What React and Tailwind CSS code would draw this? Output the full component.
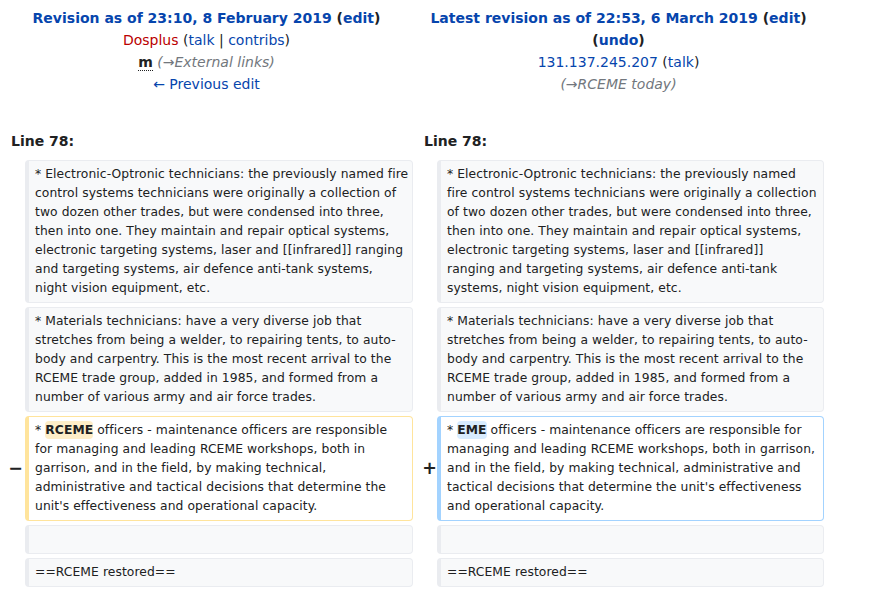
const link = "text-[#0645ad]";

const electronicLeft = [
    "* Electronic-Optronic technicians: the previously named fire",
    "control systems technicians were originally a collection of",
    "two dozen other trades, but were condensed into three,",
    "then into one. They maintain and repair optical systems,",
    "electronic targeting systems, laser and [[infrared]] ranging",
    "and targeting systems, air defence anti-tank systems,",
    "night vision equipment, etc.",
];

const electronicRight = [
    "* Electronic-Optronic technicians: the previously named",
    "fire control systems technicians were originally a collection",
    "of two dozen other trades, but were condensed into three,",
    "then into one. They maintain and repair optical systems,",
    "electronic targeting systems, laser and [[infrared]]",
    "ranging and targeting systems, air defence anti-tank",
    "systems, night vision equipment, etc.",
];

const materials = [
    "* Materials technicians: have a very diverse job that",
    "stretches from being a welder, to repairing tents, to auto-",
    "body and carpentry. This is the most recent arrival to the",
    "RCEME trade group, added in 1985, and formed from a",
    "number of various army and air force trades.",
];

const cell = "rounded-[4px] border border-l-4 px-[6px] py-[4px] text-[12.32px] tracking-[0.08px] leading-[19px] text-[#202122]";
const contextCell = `${cell} bg-[#f8f9fa] border-[#eaecf0]`;

function Lines({ lines }) {
    return lines.map((line, i) => (
        <div key={i} className="whitespace-nowrap">
            {line}
        </div>
    ));
}

function Marker({ children, pad }) {
    return (
        <div className={`flex items-center justify-end text-[17.5px] font-bold text-[#202122] ${pad}`}>
            {children}
        </div>
    );
}

function Context({ left, right }) {
    return (
        <>
            <div />
            <div className={contextCell}>
                <Lines lines={left} />
            </div>
            <div />
            <div className={contextCell}>
                <Lines lines={right || left} />
            </div>
        </>
    );
}

export default function App() {
    return (
        <div
            className="w-[874px] h-[591px] overflow-hidden bg-white text-[#202122]"
            style={{ fontFamily: "'DejaVu Sans', sans-serif" }}
        >
            <div className="grid w-[824px] grid-cols-[413px_411px] pt-[7px] text-center text-[14px] leading-[22px]">
                <div>
                    <div className="font-bold">
                        <span className={link}>Revision as of 23:10, 8 February 2019</span> (
                        <span className={link}>edit</span>)
                    </div>
                    <div>
                        <span className="text-[#ba0000]">Dosplus</span> (
                        <span className={link}>talk</span> | <span className={link}>contribs</span>)
                    </div>
                    <div>
                        <abbr className="font-bold no-underline border-b border-dotted border-[#202122]">m</abbr>{" "}
                        <span className="italic text-[#72777d]">(→External links)</span>
                    </div>
                    <div className={link}>← Previous edit</div>
                </div>
                <div>
                    <div className="font-bold">
                        <span className={link}>Latest revision as of 22:53, 6 March 2019</span> (
                        <span className={link}>edit</span>)
                    </div>
                    <div className="font-bold">
                        (<span className={link}>undo</span>)
                    </div>
                    <div>
                        <span className={link}>131.137.245.207</span> (<span className={link}>talk</span>)
                    </div>
                    <div className="italic text-[#72777d]">(→RCEME today)</div>
                </div>
            </div>

            <div className="mt-[35px] grid w-[824px] grid-cols-[413px_411px] text-[14px] font-bold leading-[22px]">
                <div className="pl-[11px]">Line 78:</div>
                <div className="pl-[11px]">Line 78:</div>
            </div>

            <div className="mt-[8px] grid w-[824px] grid-cols-[25px_388px_24px_386.5px] gap-y-[4px]">
                <Context left={electronicLeft} right={electronicRight} />
                <Context left={materials} />

                <Marker pad="pr-[2px]">−</Marker>
                <div className={`${cell} bg-white border-[#ffe49c]`}>
                    <div className="whitespace-nowrap">
                        * <span className="rounded-[4px] bg-[#feeec8] py-[2px] font-bold">RCEME</span> officers -
                        maintenance officers are responsible
                    </div>
                    <Lines
                        lines={[
                            "for managing and leading RCEME workshops, both in",
                            "garrison, and in the field, by making technical,",
                            "administrative and tactical decisions that determine the",
                            "unit's effectiveness and operational capacity.",
                        ]}
                    />
                </div>
                <Marker pad="pr-0">+</Marker>
                <div className={`${cell} bg-white border-[#a3d3ff]`}>
                    <div className="whitespace-nowrap">
                        * <span className="rounded-[4px] bg-[#d8ecff] py-[2px] font-bold">EME</span> officers -
                        maintenance officers are responsible for
                    </div>
                    <Lines
                        lines={[
                            "managing and leading RCEME workshops, both in garrison,",
                            "and in the field, by making technical, administrative and",
                            "tactical decisions that determine the unit's effectiveness",
                            "and operational capacity.",
                        ]}
                    />
                </div>

                <Context left={["\u00a0"]} />
                <Context left={["==RCEME restored=="]} />
            </div>
        </div>
    );
}
